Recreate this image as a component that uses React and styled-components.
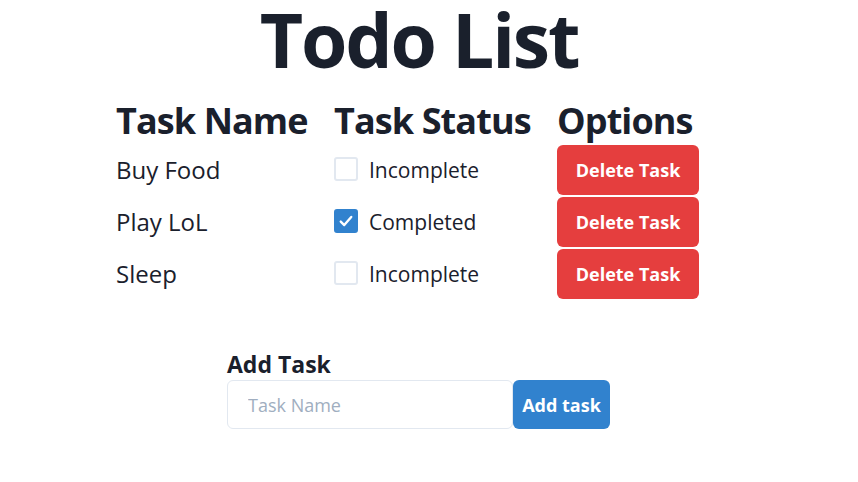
import React, { useState } from 'react'
import styled, { createGlobalStyle } from 'styled-components'

const GlobalStyle = createGlobalStyle`
  body {
    margin: 0;
    background: #ffffff;
    color: #1a202c;
    font-family: "Segoe UI", "Open Sans", "Noto Sans", sans-serif;
  }
`

const Page = styled.div`
  width: 838px;
  padding-top: 2px;
  display: flex;
  flex-direction: column;
  align-items: center;
`
const Title = styled.h1`
  margin: 0;
  font-size: 75px;
  font-weight: 700;
  line-height: 74px;
  letter-spacing: -2.2px;
`
const Table = styled.div`
  align-self: flex-start;
  margin-left: 116px;
  margin-top: 23px;
  display: grid;
  grid-template-columns: 218px 223px 142px;
  row-gap: 2px;
  align-items: center;
`
const HeadCell = styled.div`
  font-size: 36px;
  font-weight: 700;
  line-height: 44px;
  letter-spacing: -0.9px;
  white-space: nowrap;
`
const NameCell = styled.div`
  font-size: 24px;
  line-height: 36px;
`
const StatusCell = styled.label`
  display: flex;
  align-items: center;
  gap: 11px;
  font-size: 21px;
  line-height: 30px;
  cursor: pointer;
`
const Box = styled.span`
  box-sizing: border-box;
  width: 24px;
  height: 24px;
  margin-top: -2px;
  border-radius: 3px;
  border: 2px solid ${p => (p.checked ? '#3182ce' : '#e2e8f0')};
  background: ${p => (p.checked ? '#3182ce' : '#ffffff')};
  display: flex;
  align-items: center;
  justify-content: center;
  color: #ffffff;
`
const Button = styled.button`
  box-sizing: border-box;
  width: ${p => p.w}px;
  height: ${p => p.h || 50}px;
  border: none;
  border-radius: 6px;
  background: ${p => p.bg};
  color: #ffffff;
  font-family: inherit;
  font-size: 18px;
  font-weight: 700;
  padding: 0;
  cursor: pointer;
  white-space: nowrap;
`
const AddSection = styled.div`
  margin-top: 51px;
  margin-left: -1px;
  display: flex;
  flex-direction: column;
  align-items: flex-start;
`
const AddHeading = styled.h2`
  margin: 0 0 2px;
  font-size: 23px;
  font-weight: 700;
  line-height: 28px;
`
const InputRow = styled.div`
  display: flex;
  align-items: center;
`
const Input = styled.input`
  box-sizing: border-box;
  width: 286px;
  height: 49px;
  border: 1px solid #e2e8f0;
  border-radius: 6px;
  padding: 0 20px;
  font-family: inherit;
  font-size: 18px;
  color: #1a202c;
  outline: none;
  &::placeholder {
    color: #a0aec0;
  }
`

const Check = () => (
  <svg width="14" height="14" viewBox="0 0 12 10" fill="none">
    <polyline
      points="1.5 5.5 4.5 8.5 10.5 1.5"
      stroke="currentColor"
      strokeWidth="2"
      strokeLinecap="round"
      strokeLinejoin="round"
    />
  </svg>
)

const initialTasks = [
  { name: 'Buy Food', done: false },
  { name: 'Play LoL', done: true },
  { name: 'Sleep', done: false },
]

export default function App() {
  const [tasks, setTasks] = useState(initialTasks)
  const [text, setText] = useState('')

  const toggle = i =>
    setTasks(tasks.map((t, j) => (j === i ? { ...t, done: !t.done } : t)))
  const remove = i => setTasks(tasks.filter((_, j) => j !== i))
  const add = () => {
    if (!text.trim()) return
    setTasks([...tasks, { name: text.trim(), done: false }])
    setText('')
  }

  return (
    <Page>
      <GlobalStyle />
      <Title>Todo List</Title>
      <Table>
        <HeadCell>Task Name</HeadCell>
        <HeadCell>Task Status</HeadCell>
        <HeadCell>Options</HeadCell>
        {tasks.map((t, i) => (
          <React.Fragment key={i}>
            <NameCell>{t.name}</NameCell>
            <StatusCell onClick={() => toggle(i)}>
              <Box checked={t.done}>{t.done && <Check />}</Box>
              {t.done ? 'Completed' : 'Incomplete'}
            </StatusCell>
            <div>
              <Button bg="#e53e3e" w={142} onClick={() => remove(i)}>
                Delete Task
              </Button>
            </div>
          </React.Fragment>
        ))}
      </Table>
      <AddSection>
        <AddHeading>Add Task</AddHeading>
        <InputRow>
          <Input
            placeholder="Task Name"
            value={text}
            onChange={e => setText(e.target.value)}
          />
          <Button bg="#3182ce" w={97} h={49} onClick={add}>
            Add task
          </Button>
        </InputRow>
      </AddSection>
    </Page>
  )
}
